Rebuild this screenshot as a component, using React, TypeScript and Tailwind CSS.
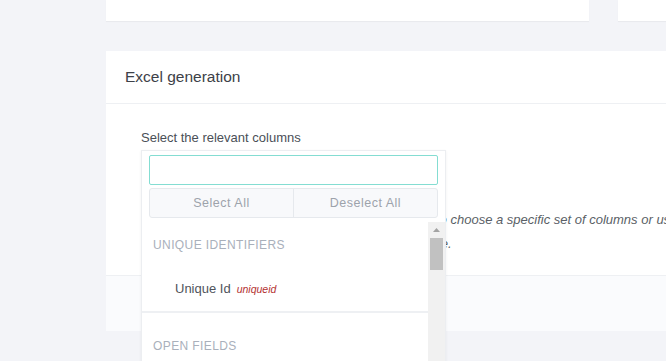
export default function App() {
  return (
    <div className="relative h-[361px] w-[666px] overflow-hidden bg-[#f3f4f8] font-['Liberation_Sans',Arial,sans-serif]">
      {/* top cards */}
      <div className="flex gap-[29px] pl-[106px]">
        <div className="h-[21px] w-[483px] bg-white shadow-[0_1px_1px_rgba(0,0,0,0.04)]" />
        <div className="h-[21px] flex-1 bg-white shadow-[0_1px_1px_rgba(0,0,0,0.04)]" />
      </div>

      {/* Excel card */}
      <div className="ml-[106px] mt-[30px] h-[280px] bg-white">
        <div className="flex h-[53px] items-center border-b border-[#eef0f3] pl-[19px] text-[15.5px] text-[#3d4148]">
          Excel generation
        </div>
        <div className="h-[171px] pl-[35px] pt-[24px]">
          <div className="text-[13px] text-[#4a4f57]">Select the relevant columns</div>
          <div className="mt-[5px] h-[30px] w-[217px] rounded-t-[3px] border border-[#e3e5e9] bg-white" />
          <div className="mt-[25px] pl-[295px] text-[13px] italic leading-[24px] text-[#5a5f66]">
            <div className="whitespace-nowrap">to choose a specific set of columns or use</div>
            <div className="-ml-[6px] whitespace-nowrap">ate.</div>
          </div>
        </div>
        <div className="h-[56px] border-t border-[#eef0f3] bg-[#fafbfd]" />
      </div>

      {/* dropdown */}
      <div className="absolute left-[141px] top-[150px] w-[305px] border border-[#eceef1] bg-white shadow-[0_1px_3px_rgba(0,0,0,0.06)]">
        <div className="px-[7px] pt-[4px]">
          <div className="h-[30px] rounded-[2px] border-[1.5px] border-[#84ddd2] bg-white" />
          <div className="mt-[3px] flex h-[30px] rounded-[3px] border border-[#e6e9ed] bg-[#f8f9fb] text-[12.5px] tracking-[0.5px] text-[#9da3ab]">
            <div className="flex flex-1 items-center justify-center border-r border-[#e6e9ed]">Select All</div>
            <div className="flex flex-1 items-center justify-center">Deselect All</div>
          </div>
        </div>
        <div className="mt-[4px] flex">
          <div className="flex-1">
            <div className="pl-[11px] pt-[14px] text-[12px] tracking-[0.4px] text-[#a9b0bb]">UNIQUE IDENTIFIERS</div>
            <div className="flex items-baseline gap-[6px] pb-[12px] pl-[33px] pt-[25px]">
              <span className="text-[13px] text-[#50545b]">Unique Id</span>
              <span className="text-[10.5px] italic text-[#b3302f]">uniqueid</span>
            </div>
            <div className="h-[2px] bg-[#eef0f3]" />
            <div className="pl-[11px] pt-[24px] text-[12px] tracking-[0.4px] text-[#a9b0bb]">OPEN FIELDS</div>
            <div className="h-[60px]" />
          </div>
          <div className="w-[17px] bg-[#f1f1f1]">
            <div className="flex h-[16px] items-center justify-center">
              <svg width="7" height="4" viewBox="0 0 7 4">
                <path d="M0 4 L3.5 0 L7 4 Z" fill="#a3a3a3" />
              </svg>
            </div>
            <div className="mx-[2px] h-[32px] bg-[#c1c1c1]" />
          </div>
        </div>
      </div>
    </div>
  );
}
